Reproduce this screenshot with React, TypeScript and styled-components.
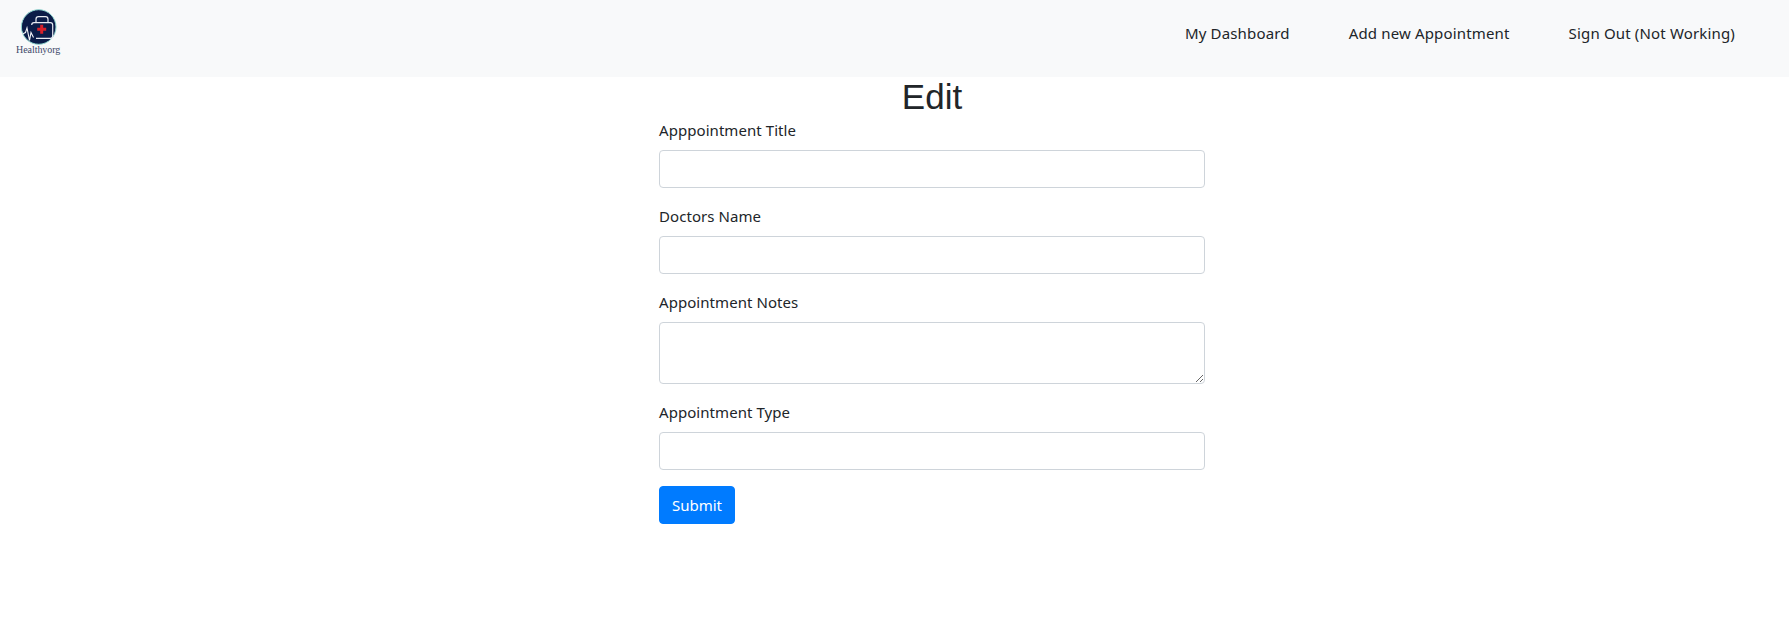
import React from "react";
import styled, { createGlobalStyle } from "styled-components";

const GlobalStyle = createGlobalStyle`
  * {
    box-sizing: border-box;
  }
  body {
    margin: 0;
    background: #fff;
    color: #212529;
    font-family: "Noto Sans", "Open Sans", sans-serif;
    font-size: 15px;
    line-height: 24px;
    letter-spacing: 0.06px;
  }
`;

const Navbar = styled.nav`
  display: flex;
  align-items: center;
  justify-content: space-between;
  height: 77px;
  padding: 0 54px 0 16px;
  background: #f8f9fa;
`;

const NavLinks = styled.div`
  display: flex;
  gap: 59px;
  margin-bottom: 11px;
  letter-spacing: 0.16px;
`;

const NavLink = styled.a`
  color: #212529;
  text-decoration: none;
  cursor: pointer;
`;

const Main = styled.main`
  width: 546px;
  margin-left: 659px;
`;

const Title = styled.h1`
  margin: 0;
  height: 41px;
  font-family: "Liberation Sans", Arial, sans-serif;
  font-size: 35px;
  font-weight: 400;
  line-height: 39px;
  letter-spacing: 0;
  text-align: center;
`;

const FormGroup = styled.div`
  margin-bottom: 16px;
`;

const Label = styled.label`
  display: block;
  margin-bottom: 8px;
`;

const Input = styled.input`
  display: block;
  width: 100%;
  height: 38px;
  padding: 6px 12px;
  border: 1px solid #ced4da;
  border-radius: 4px;
  background: #fff;
  font: inherit;
`;

const TextArea = styled.textarea`
  display: block;
  width: 100%;
  height: 62px;
  padding: 6px 12px;
  border: 1px solid #ced4da;
  border-radius: 4px;
  background: #fff;
  font: inherit;
`;

const SubmitButton = styled.button`
  display: block;
  width: 76px;
  height: 38px;
  padding: 0;
  border: 1px solid #007bff;
  border-radius: 4px;
  background: #007bff;
  color: #fff;
  font: inherit;
  cursor: pointer;
`;

const LogoWrap = styled.div`
  position: relative;
  width: 46px;
  height: 60px;
  margin-bottom: 17px;
`;

const LogoText = styled.span`
  position: absolute;
  left: 0;
  top: 44px;
  font-family: "Liberation Serif", serif;
  font-size: 10px;
  line-height: 12px;
  letter-spacing: -0.05px;
  color: #3d4869;
  white-space: nowrap;
`;

const Logo = () => (
  <LogoWrap>
    <svg width="46" height="46" viewBox="0 0 46 46">
      <circle cx="22.7" cy="27" r="17.3" fill="#0b1c48" stroke="#8fd6d0" strokeWidth="1" />
      <path
        d="M15.7 25a2.3 2.3 0 0 1 2.3-2.3h16.4a2.3 2.3 0 0 1 2.3 2.3v11a2.3 2.3 0 0 1-2.3 2.3H20"
        fill="none"
        stroke="#e8ebf2"
        strokeWidth="1.2"
      />
      <path d="M20 22.7v-3.5a2.5 2.5 0 0 1 2.5-2.5h7a2.5 2.5 0 0 1 2.5 2.5v3.5" fill="none" stroke="#e8ebf2" strokeWidth="1.2" />
      <path d="M24.2 24.8h3v3h3v3h-3v3h-3v-3h-3v-3h3z" fill="#d8202a" />
      <path d="M6.5 34l3-1.5 1.5-4.5 2.5 12.5 1.5-8 2.5 5" fill="none" stroke="#f4f5f8" strokeWidth="1.1" />
    </svg>
    <LogoText>Healthyorg</LogoText>
  </LogoWrap>
);

const App = () => {
  return (
    <>
      <GlobalStyle />
      <Navbar>
        <Logo />
        <NavLinks>
          <NavLink>My Dashboard</NavLink>
          <NavLink>Add new Appointment</NavLink>
          <NavLink>Sign Out (Not Working)</NavLink>
        </NavLinks>
      </Navbar>
      <Main>
        <Title>Edit</Title>
        <form>
          <FormGroup>
            <Label>Apppointment Title</Label>
            <Input type="text" />
          </FormGroup>
          <FormGroup>
            <Label>Doctors Name</Label>
            <Input type="text" />
          </FormGroup>
          <FormGroup>
            <Label>Appointment Notes</Label>
            <TextArea />
          </FormGroup>
          <FormGroup>
            <Label>Appointment Type</Label>
            <Input type="text" />
          </FormGroup>
          <SubmitButton type="button">Submit</SubmitButton>
        </form>
      </Main>
    </>
  );
};

export default App;
